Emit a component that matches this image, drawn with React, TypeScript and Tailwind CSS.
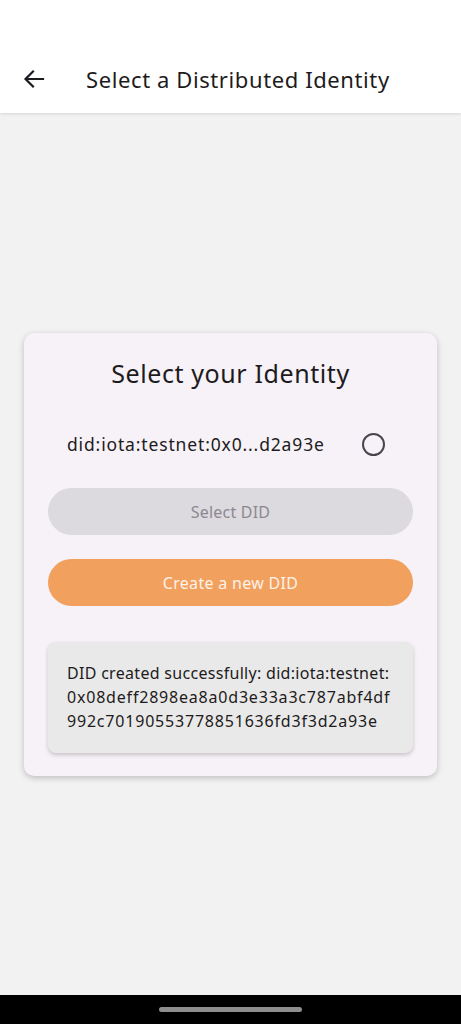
import React from "react";

export default function App() {
  return (
    <div
      className="w-[461px] h-[1024px] flex flex-col bg-[#f2f2f2] overflow-hidden"
      style={{ fontFamily: '"Noto Sans", "Open Sans", sans-serif' }}
    >
      <header className="h-[113px] bg-white flex flex-col shadow-[0_1px_3px_rgba(0,0,0,0.12)] relative z-10">
        <div className="h-[48px]" />
        <div className="flex-1 flex items-center pb-[3px]">
          <div className="w-[86px] flex items-center pl-[23px]">
            <svg width="22" height="20" viewBox="0 0 22 20" fill="none">
              <path d="M20 10H3M10 2.5L2.5 10L10 17.5" stroke="#1d1b20" strokeWidth="2.2" strokeLinecap="square" />
            </svg>
          </div>
          <h1 className="text-[22px] text-[#1d1b20] tracking-[0.6px] leading-none">Select a Distributed Identity</h1>
        </div>
      </header>

      <main className="flex-1 flex items-center justify-center px-[24px] pt-[1px]">
        <div className="w-full bg-[#f7f2f7] rounded-[10px] shadow-[0_2px_6px_rgba(0,0,0,0.22)] px-[24px] pt-[24px] pb-[23px] flex flex-col">
          <h2 className="text-center text-[25px] text-[#1d1b20] leading-[32px] tracking-[0.6px]">Select your Identity</h2>
          <div className="flex items-center mt-[31px] h-[48px] pl-[19px] pr-[28px]">
            <span className="flex-1 text-[17.5px] text-[#1d1b20] tracking-[0.85px]">did:iota:testnet:0x0...d2a93e</span>
            <span className="w-[23px] h-[23px] rounded-full border-[2px] border-[#49454f]" />
          </div>
          <button className="mt-[20px] h-[47px] rounded-full bg-[#dcd9df] text-[16px] text-[#8c8891] tracking-[0.2px] flex items-center justify-center">
            Select DID
          </button>
          <button className="mt-[24px] h-[47px] rounded-full bg-[#f2a05e] text-[16px] text-[#fdf2e8] tracking-[0.3px] flex items-center justify-center">
            Create a new DID
          </button>
          <div className="mt-[36px] bg-[#e9e9e9] rounded-[8px] shadow-[0_2px_4px_rgba(0,0,0,0.2)] px-[19px] pt-[19px] pb-[20px]">
            <p className="text-[16px] leading-[24px] text-[#1d1b20] tracking-[0.3px] whitespace-nowrap">
              DID created successfully: did:iota:testnet:
              <br />
              <span className="tracking-[0.8px]">0x08deff2898ea8a0d3e33a3c787abf4df</span>
              <br />
              <span className="tracking-[0.8px]">992c70190553778851636fd3f3d2a93e</span>
            </p>
          </div>
        </div>
      </main>

      <footer className="h-[29px] bg-black flex items-center justify-center">
        <div className="w-[143px] h-[5px] rounded-full bg-[#8e8e8e]" />
      </footer>
    </div>
  );
}
